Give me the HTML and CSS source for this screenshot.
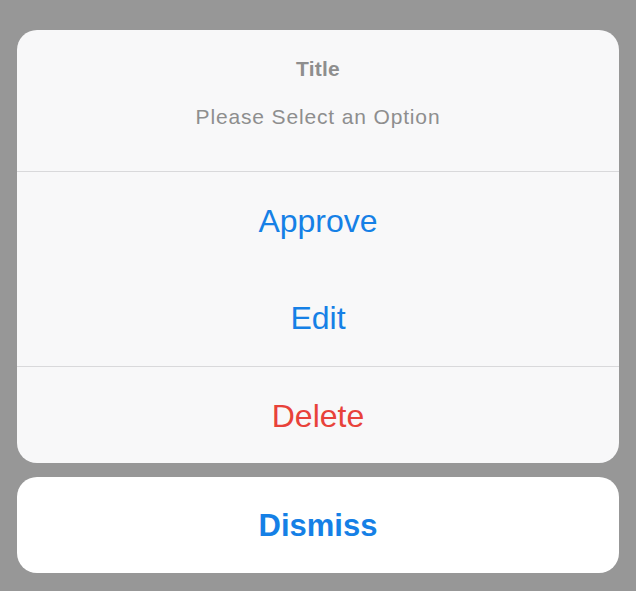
FILE: index.html
```html
<!DOCTYPE html>
<html>
<head>
<meta charset="utf-8">
<link rel="stylesheet" href="styles.css">
</head>
<body>
<div class="sheet">
  <div class="card">
    <div class="header">
      <div class="title">Title</div>
      <div class="subtitle">Please Select an Option</div>
    </div>
    <div class="group">
      <div class="action">Approve</div>
      <div class="action">Edit</div>
    </div>
    <div class="group">
      <div class="action danger">Delete</div>
    </div>
  </div>
  <div class="card cancel">
    <div class="action bold">Dismiss</div>
  </div>
</div>
</body>
</html>
```
FILE: styles.css
```css
html, body {
  margin: 0;
  padding: 0;
  background: #979797;
  font-family: "Liberation Sans", Arial, sans-serif;
}
.sheet {
  padding: 30px 17px 18px;
  display: flex;
  flex-direction: column;
  gap: 14px;
}
.card {
  background: #f8f8f9;
  border-radius: 20px;
  overflow: hidden;
}
.card.cancel {
  background: #ffffff;
}
.header {
  padding: 25px 0 40px;
  display: flex;
  flex-direction: column;
  align-items: center;
  gap: 20px;
}
.title {
  font-size: 21px;
  font-weight: bold;
  line-height: 28px;
  color: #8e8e8e;
  letter-spacing: 0.2px;
}
.subtitle {
  font-size: 21px;
  line-height: 28px;
  color: #8e8e8e;
  letter-spacing: 0.85px;
}
.group {
  border-top: 1px solid #d9d9db;
}
.action {
  height: 97px;
  display: flex;
  align-items: center;
  justify-content: center;
  font-size: 32px;
  color: #1580e6;
  padding-top: 2px;
  box-sizing: border-box;
}
.group:last-child .action:last-child {
  height: 96px;
}
.cancel .action {
  height: 96px;
}
.action.danger {
  color: #e8423a;
}
.action.bold {
  font-weight: bold;
  font-size: 31px;
}
```
